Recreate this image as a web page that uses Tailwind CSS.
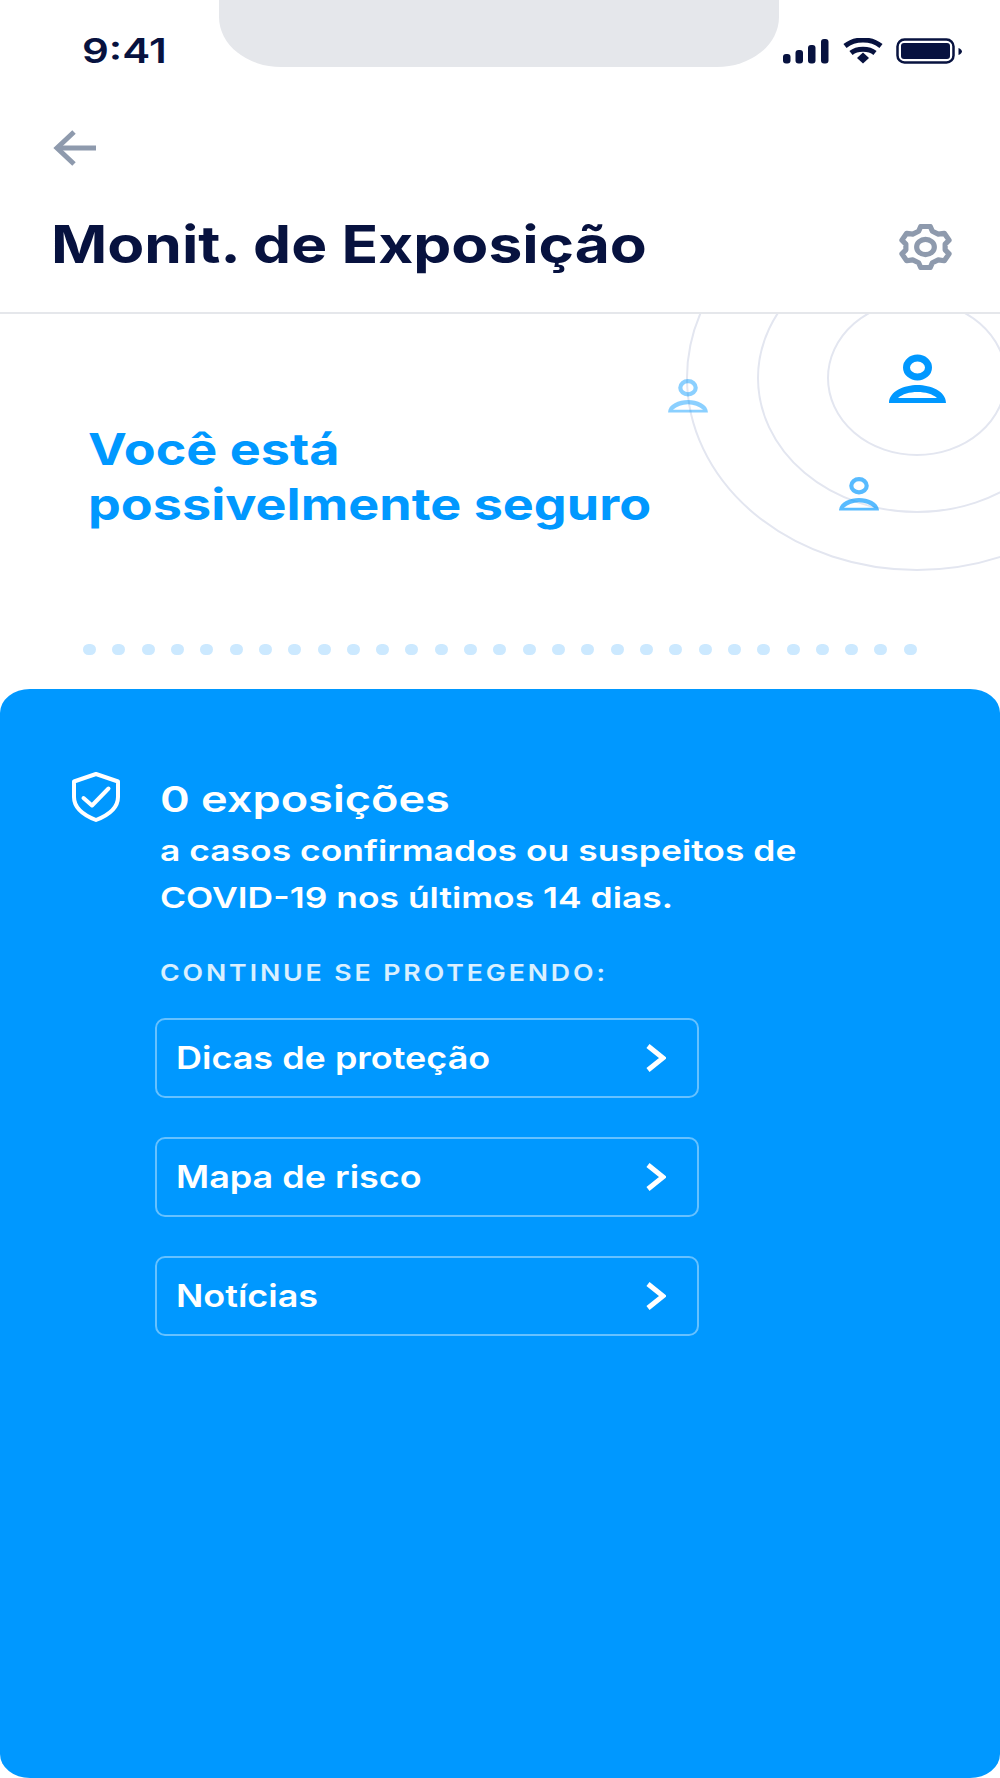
<!DOCTYPE html>
<html lang="pt-BR">
<head>
    <meta charset="UTF-8">
    <title>Monit. de Exposição</title>
    <script src="https://cdn.jsdelivr.net/npm/@tailwindcss/browser@4"></script>
</head>
<body class="bg-white font-['Inter',sans-serif]">
    <div class="relative w-[1000px] h-[1778px] overflow-hidden flex flex-col bg-white">
        <!-- notch -->
        <div class="absolute top-0 left-[219px] w-[560px] h-[67px] bg-[#e5e7eb] rounded-bl-[62px_50px] rounded-br-[62px_50px]"></div>

        <!-- status bar -->
        <div class="h-[101px] shrink-0 flex justify-between pt-[31px] pl-[82px] pr-[38px]">
            <span class="text-[34px] leading-[40px] font-semibold text-[#07123f] origin-left scale-x-[1.235]">9:41</span>
            <svg class="w-[179px] h-[26px] mt-[7px]" viewBox="783 38 179 26">
                <g fill="#07123f">
                    <rect x="783" y="54" width="7.5" height="9.5" rx="3"/>
                    <rect x="795.5" y="50" width="7.5" height="13.5" rx="3"/>
                    <rect x="808" y="45" width="7.5" height="18.5" rx="3"/>
                    <rect x="821" y="39" width="7.5" height="24.5" rx="3"/>
                    <path d="M857 58 L863 52.5 L869 58 L863 63.5Z"/>
                    <rect x="901" y="43" width="49" height="16" rx="3"/>
                    <path d="M958.500 48 C961 49 962 50.500 962 51.500 C962 52.500 961 54 958.500 55Z"/>
                </g>
                <g fill="none" stroke="#07123f" stroke-width="5">
                    <path d="M845 46 C855 38 871 38 881 46"/>
                    <path d="M851 53 C857 48 869 48 875 53"/>
                </g>
                <rect x="897.500" y="39.500" width="56" height="23" rx="7" fill="none" stroke="#07123f" stroke-width="2.500"/>
            </svg>
        </div>

        <!-- back + title -->
        <div class="h-[213px] shrink-0 border-b-2 border-[#e5e7eb] pl-[51px] pr-[48px]">
            <svg class="w-[44px] h-[36px] mt-[29px] ml-[2px]" viewBox="0 0 44 36" fill="none" stroke="#8e9aad" stroke-width="5">
                <path d="M43 18 H4"/>
                <path d="M21 2 L4 18 L21 34"/>
            </svg>
            <div class="flex justify-between items-start mt-[48px]">
                <h1 class="text-[52px] leading-[62px] font-bold text-[#07123f] origin-left scale-x-[1.162] whitespace-nowrap">Monit. de Exposição</h1>
                <svg class="w-[53px] h-[46px] mt-[10px]" viewBox="0 0 51 45" preserveAspectRatio="none" fill="none" stroke="#8e9aad" stroke-width="5" stroke-linejoin="round">
                    <path d="M20.900 2.400 H30.100 L32.100 7.100 L37.800 9.900 L43.600 9 L48.200 15.800 L44.400 19.700 V25.300 L48.200 29.200 L43.600 36 L37.800 35.100 L32.100 37.900 L30.100 42.600 H20.900 L18.900 37.900 L13.200 35.100 L7.400 36 L2.800 29.200 L6.600 25.300 V19.700 L2.800 15.800 L7.400 9 L13.200 9.900 L18.900 7.100Z"/>
                    <ellipse cx="25.500" cy="22.500" rx="8.500" ry="7.500"/>
                </svg>
            </div>
        </div>

        <!-- hero -->
        <div class="relative h-[375px] shrink-0 pl-[88px] pt-[108px]">
            <svg class="absolute top-0 right-0 w-[360px] h-[300px]" viewBox="640 314 360 300" fill="none">
                <g stroke="#e3e6f0" stroke-width="2">
                    <ellipse cx="917" cy="378" rx="89" ry="77"/>
                    <ellipse cx="917" cy="378" rx="159" ry="134"/>
                    <ellipse cx="917" cy="378" rx="230" ry="192"/>
                </g>
                <g transform="translate(917.500 355)">
                    <ellipse cx="0" cy="12.500" rx="11" ry="9.500" stroke="#0098ff" stroke-width="7"/>
                    <path fill="#0098ff" fill-rule="evenodd" d="M-28.500 48 C-28.500 36 -13 30 0 30 C13 30 28.500 36 28.500 48Z M-19.500 43 C-15 39 -8 37 0 37 C8 37 15 39 19.500 43Z"/>
                </g>
                <g transform="translate(688 379) scale(.7)" opacity=".45">
                    <ellipse cx="0" cy="12.500" rx="11" ry="9.500" stroke="#0098ff" stroke-width="6"/>
                    <path fill="#0098ff" fill-rule="evenodd" d="M-28.500 48 C-28.500 36 -13 30 0 30 C13 30 28.500 36 28.500 48Z M-21.500 44 C-16 39 -8 36 0 36 C8 36 16 39 21.500 44Z"/>
                </g>
                <g transform="translate(859 477) scale(.7)" opacity=".65">
                    <ellipse cx="0" cy="12.500" rx="11" ry="9.500" stroke="#0098ff" stroke-width="6"/>
                    <path fill="#0098ff" fill-rule="evenodd" d="M-28.500 48 C-28.500 36 -13 30 0 30 C13 30 28.500 36 28.500 48Z M-21.500 44 C-16 39 -8 36 0 36 C8 36 16 39 21.500 44Z"/>
                </g>
            </svg>
            <h2 class="relative text-[44px] leading-[55px] font-bold text-[#0098ff] origin-left scale-x-[1.184] whitespace-nowrap">Você está<br>possivelmente seguro</h2>
            <div id="dots" class="absolute top-[330px] left-[83px] w-[834px] flex justify-between"></div>
        </div>

        <!-- blue panel -->
        <div class="flex-1 bg-[#0098ff] rounded-[30px/24px] text-white pt-[88px]">
            <div class="flex items-start pl-[72px]">
                <svg class="w-[48px] h-[50px] -mt-[5px] shrink-0" viewBox="0 0 48 50" fill="none" stroke="#fff" stroke-width="4" stroke-linejoin="round" stroke-linecap="round">
                    <path d="M24 2 L46 9.500 V25 C46 36 37 43 24 48 C11 43 2 36 2 25 V9.500Z"/>
                    <path d="M11.500 26 L20 33.500 L36.500 16.500"/>
                </svg>
                <div class="ml-[40px]">
                    <p class="text-[36px] leading-[44px] font-semibold origin-left scale-x-[1.253] whitespace-nowrap">0 exposições</p>
                    <p class="mt-[6px] text-[29px] leading-[47px] font-semibold origin-left scale-x-[1.222] whitespace-nowrap">a casos confirmados ou suspeitos de<br>COVID-19 nos últimos 14 dias.</p>
                </div>
            </div>
            <p class="mt-[37px] ml-[160px] text-[23px] leading-[30px] font-semibold tracking-[2.5px] text-white/85 origin-left scale-x-[1.16] whitespace-nowrap">CONTINUE SE PROTEGENDO:</p>
            <div class="mt-[30px] ml-[155px] w-[544px] flex flex-col gap-[39px]">
                <div class="h-[80px] border-2 border-white/40 rounded-[10px] pl-[19px] pr-[31px] flex items-center justify-between">
                    <span class="text-[31px] font-semibold origin-left scale-x-[1.16] whitespace-nowrap">Dicas de proteção</span>
                    <svg class="w-[20px] h-[28px]" viewBox="0 0 20 28" fill="none" stroke="#fff" stroke-width="5"><path d="M2 2 L17 14 L2 26"/></svg>
                </div>
                <div class="h-[80px] border-2 border-white/40 rounded-[10px] pl-[19px] pr-[31px] flex items-center justify-between">
                    <span class="text-[31px] font-semibold origin-left scale-x-[1.16] whitespace-nowrap">Mapa de risco</span>
                    <svg class="w-[20px] h-[28px]" viewBox="0 0 20 28" fill="none" stroke="#fff" stroke-width="5"><path d="M2 2 L17 14 L2 26"/></svg>
                </div>
                <div class="h-[80px] border-2 border-white/40 rounded-[10px] pl-[19px] pr-[31px] flex items-center justify-between">
                    <span class="text-[31px] font-semibold origin-left scale-x-[1.16] whitespace-nowrap">Notícias</span>
                    <svg class="w-[20px] h-[28px]" viewBox="0 0 20 28" fill="none" stroke="#fff" stroke-width="5"><path d="M2 2 L17 14 L2 26"/></svg>
                </div>
            </div>
        </div>
    </div>

    <script>
        const dots = document.getElementById('dots');
        for (let i = 0; i < 29; i++) {
            const dot = document.createElement('span');
            dot.className = 'w-[13px] h-[11px] rounded-full bg-[#cce9ff]';
            dots.appendChild(dot);
        }
    </script>
</body>
</html>
